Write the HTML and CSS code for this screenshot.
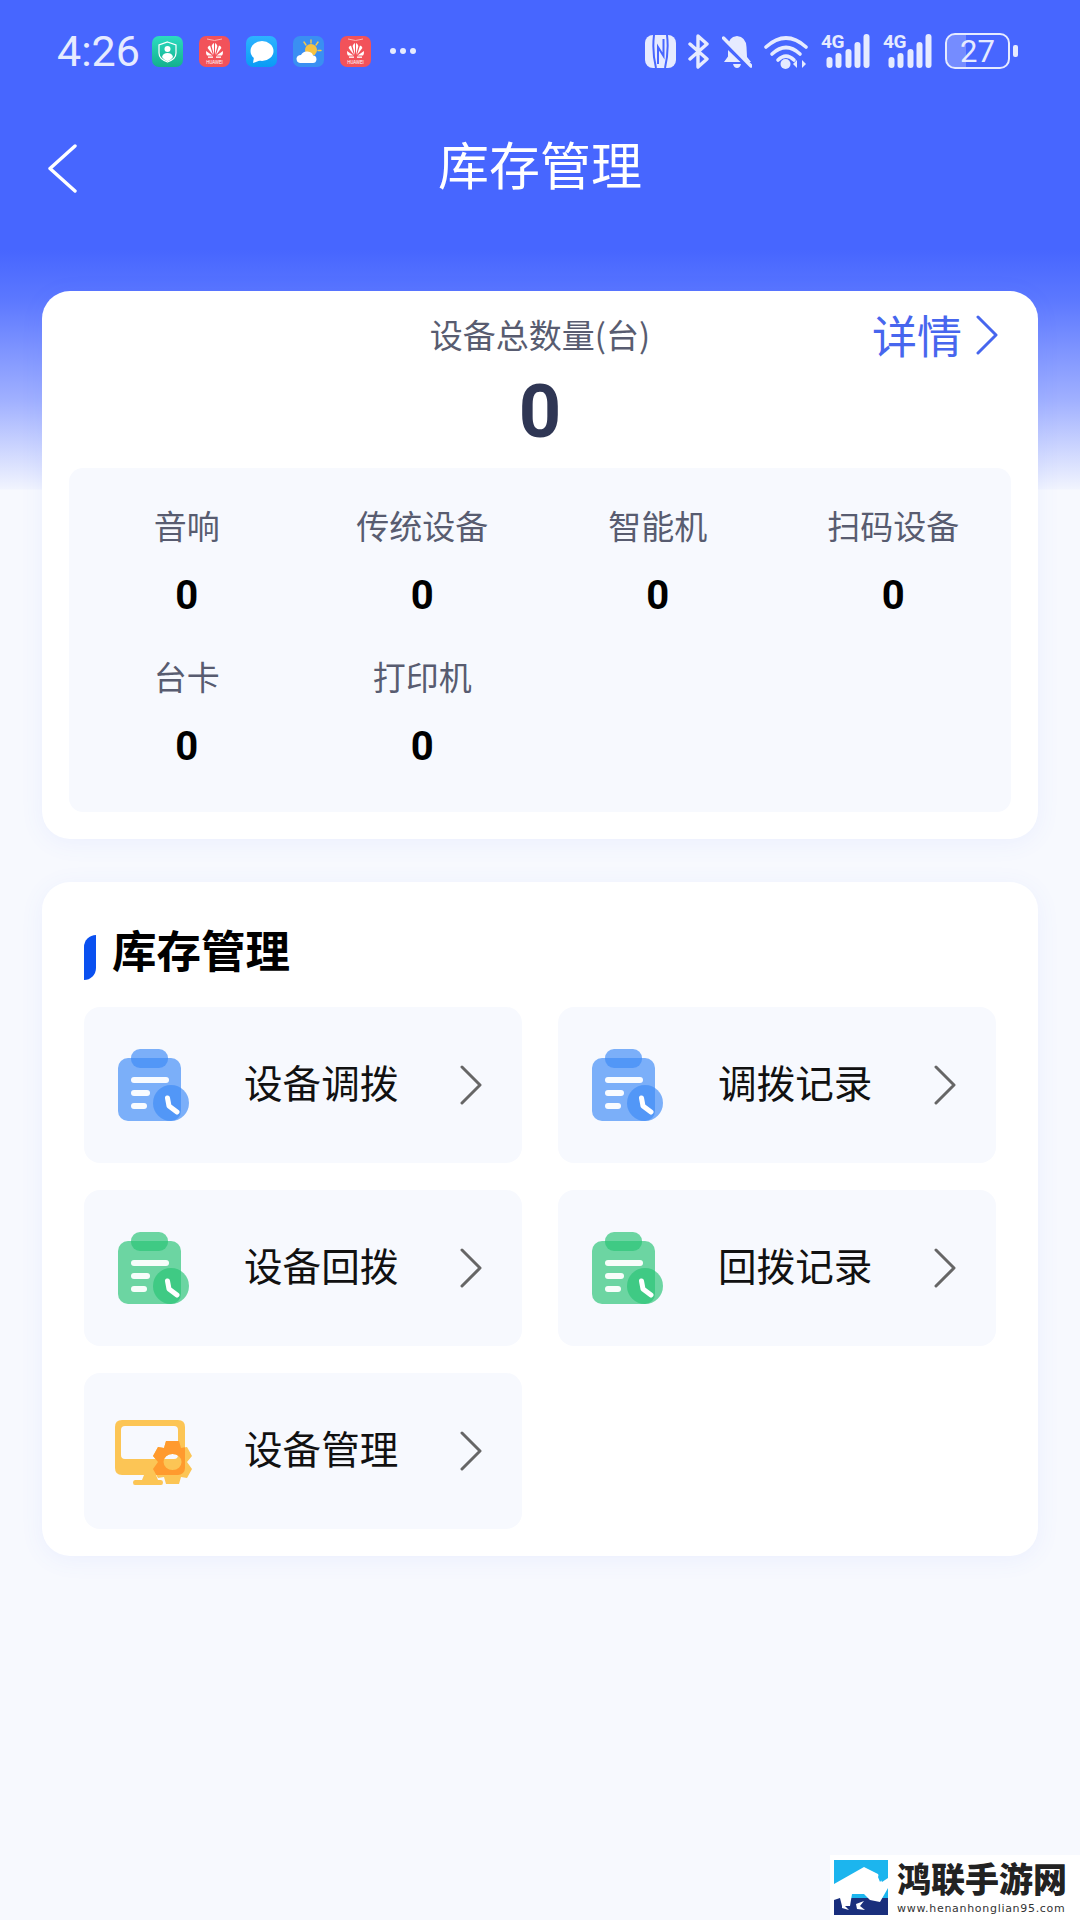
FILE: index.html
```
<!DOCTYPE html>
<html lang="zh">
<head>
    <meta charset="utf-8">
    <title>库存管理</title>
    <link rel="stylesheet" href="styles.css">
</head>
<body>
    <!-- Shared icons -->
    <svg class="defs" width="0" height="0">
        <defs>
            <clipPath id="screen-clip">
                <rect x="1" y="5" width="70" height="55" rx="7"/>
            </clipPath>
            <path id="gear" fill-rule="evenodd" d="M52 26 H65 L67 33 L73 32 L78 41 L73 47 L78 54 L73 63 L67 62 L65 69 H52 L50 62 L44 63 L39 54 L44 47 L39 41 L44 32 L50 33 Z M58.500 39 A9 8 0 1 0 58.600 55 A9 8 0 1 0 58.500 39 Z"/>
        </defs>
        <symbol id="chevron" viewBox="0 0 24 40">
            <path d="M3 2 L21 20 L3 38" fill="none" stroke="currentColor" stroke-width="3" stroke-linecap="round" stroke-linejoin="round"/>
        </symbol>
        <symbol id="clipboard" viewBox="-4 0 80 72">
            <rect x="0" y="9" width="63" height="63" rx="10" fill="currentColor" opacity=".68"/>
            <rect x="13" y="0" width="37" height="19" rx="9" fill="currentColor" opacity=".68"/>
            <rect x="13" y="28" width="38" height="6" rx="3" fill="#fff" opacity=".95"/>
            <rect x="13" y="41" width="19" height="6" rx="3" fill="#fff" opacity=".95"/>
            <rect x="13" y="54" width="16" height="6" rx="3" fill="#fff" opacity=".95"/>
            <circle cx="53" cy="54" r="18" fill="currentColor" opacity=".68"/>
            <path d="M49.500 49 L51 57 L59 63" fill="none" stroke="#fff" stroke-width="5" stroke-linecap="round" stroke-linejoin="round"/>
        </symbol>
        <symbol id="huawei" viewBox="0 0 31 31">
            <rect width="31" height="31" rx="7" fill="#f2525a"/>
            <path d="M8 3 Q15.500 6 23 3" fill="none" stroke="#ffb3b3" stroke-width="1"/>
            <g fill="#fff">
                <path d="M15 19 L12.600 10 Q13.600 7.500 15 7 Z"/>
                <path d="M16 19 L18.400 10 Q17.400 7.500 16 7 Z"/>
                <path d="M14 19 L8.600 12 Q8.600 10 11 9.500 Z"/>
                <path d="M17 19 L22.400 12 Q22.400 10 20 9.500 Z"/>
                <path d="M13.500 19.500 L7 15 Q6.800 18 8 19.500 Z"/>
                <path d="M17.500 19.500 L24 15 Q24.200 18 23 19.500 Z"/>
                <rect x="9" y="20.500" width="5" height="1.300"/>
                <rect x="17" y="20.500" width="5" height="1.300"/>
            </g>
        </symbol>
        <symbol id="sim" viewBox="0 0 49 34">
            <rect x="5.500" y="23" width="6" height="11" rx="3"/>
            <rect x="14.500" y="19" width="6" height="15" rx="3"/>
            <rect x="24.500" y="15" width="6" height="19" rx="3"/>
            <rect x="33.500" y="8" width="6" height="26" rx="3"/>
            <rect x="42.500" y="0" width="6" height="34" rx="3"/>
        </symbol>
    </svg>

    <div class="page">
        <!-- Status bar -->
        <div class="status-bar">
            <span class="time">4:26</span>
            <div class="apps">
                <svg class="app" viewBox="0 0 31 31">
                    <defs><linearGradient id="shield" x1="0" y1="0" x2="0" y2="1"><stop offset="0" stop-color="#2cdcc0"/><stop offset="1" stop-color="#14b08e"/></linearGradient></defs>
                    <rect width="31" height="31" rx="7" fill="url(#shield)"/>
                    <path d="M15.500 6 L24 9 V17 Q24 23 15.500 26 Q7 23 7 17 V9 Z" fill="none" stroke="#fff" stroke-width="1.200"/>
                    <circle cx="15.500" cy="13" r="3" fill="#fff"/>
                    <path d="M10 21 Q11 17 15.500 17 Q20 17 21 21 Q18 25 15.500 25 Q13 25 10 21 Z" fill="#fff"/>
                </svg>
                <svg class="app" viewBox="0 0 31 31"><use href="#huawei"/><text class="huawei-text" x="15.500" y="27.500">HUAWEI</text></svg>
                <svg class="app" viewBox="0 0 31 31">
                    <defs><linearGradient id="msg" x1="0" y1="0" x2="0" y2="1"><stop offset="0" stop-color="#2db3ff"/><stop offset="1" stop-color="#0a9bf5"/></linearGradient></defs>
                    <rect width="31" height="31" rx="7" fill="url(#msg)"/>
                    <ellipse cx="16" cy="15" rx="11.500" ry="10" fill="#fff"/>
                    <path d="M8 21 L7 27 L15 24 Z" fill="#fff"/>
                </svg>
                <svg class="app" viewBox="0 0 31 31">
                    <rect width="31" height="31" rx="7" fill="#3a8ff2"/>
                    <g stroke="#f5c84a" stroke-width="1.400" stroke-linecap="round">
                        <path d="M18 4 V7"/><path d="M11 6 L13 9"/><path d="M25 6 L23 9"/><path d="M28 14.500 H25"/>
                    </g>
                    <circle cx="18" cy="14" r="6" fill="#f7c341"/>
                    <path d="M7 27 Q3.500 26.500 3.500 22.500 Q4 19 8 19 Q10 15 14.500 15.500 Q19.500 16 20 19.500 Q23.500 19.500 23.500 23.500 Q23 27 20 27 Z" fill="#fff"/>
                </svg>
                <svg class="app" viewBox="0 0 31 31"><use href="#huawei"/><text class="huawei-text" x="15.500" y="27.500">HUAWEI</text></svg>
            </div>
            <div class="dots"><i></i><i></i><i></i></div>

            <div class="sys-icons">
                <svg class="sys-nfc" viewBox="0 0 31 33">
                    <rect width="31" height="33" rx="8"/>
                    <g fill="none" stroke="#4766ff" stroke-width="2">
                        <path d="M9 0 Q7 17 11 33"/>
                        <path d="M22 0 Q24 16 20 33"/>
                        <path d="M13 29 V12 L18.500 21 V4"/>
                    </g>
                </svg>
                <svg class="sys-bt" viewBox="0 0 22 35">
                    <path d="M2 10 L19 25 L10 33 V2 L19 10 L2 25" fill="none" stroke="currentColor" stroke-width="3.400" stroke-linejoin="round" stroke-linecap="round"/>
                </svg>
                <svg class="sys-bell" viewBox="0 0 30 33">
                    <path d="M15 1 Q24 2 24.500 12 L25 22 L29 27 H2 L6 21.500 V12 Q6 2 15 1 Z"/>
                    <path d="M11 29 H19 Q18 33 15 33 Q12 33 11 29 Z"/>
                    <path d="M0 5 L28 32" stroke="#4766ff" stroke-width="6"/>
                    <path d="M1.500 3 L29 31" stroke="currentColor" stroke-width="3.400" stroke-linecap="round"/>
                </svg>
                <svg class="sys-wifi" viewBox="0 0 44 35">
                    <g fill="none" stroke="currentColor" stroke-width="3.600" stroke-linecap="round">
                        <path d="M2 13 Q22 -5 42 13"/>
                        <path d="M8 20 Q22 7 36 20"/>
                        <path d="M14 26 Q22 18 30 26"/>
                    </g>
                    <circle cx="21.500" cy="30" r="5"/>
                    <path d="M29 30 L33 26 V34 Z"/>
                    <path d="M38 26 L42 30 L38 34 Z"/>
                </svg>
                <div class="signal"><span>4G</span><svg class="bars"><use href="#sim"/></svg></div>
                <div class="signal"><span>4G</span><svg class="bars"><use href="#sim"/></svg></div>
                <div class="battery">
                    <div class="battery-box"><i class="battery-fill"></i><span>27</span></div>
                    <i class="battery-cap"></i>
                </div>
            </div>
        </div>

        <!-- Nav -->
        <div class="nav">
            <svg class="back" viewBox="0 0 29 49">
                <path d="M27 2 L2 24.500 L27 47" fill="none" stroke="currentColor" stroke-width="3.400" stroke-linecap="round" stroke-linejoin="round"/>
            </svg>
            <h1 class="nav-title">库存管理</h1>
        </div>

        <!-- Totals -->
        <div class="card card-total">
            <div class="total-head">
                <span class="total-label">设备总数量(台)</span>
                <a class="detail"><span class="detail-text">详情</span><svg class="detail-arrow"><use href="#chevron"/></svg></a>
            </div>
            <div class="total-num">0</div>
            <div class="stats">
                <div class="stat"><div class="stat-label">音响</div><div class="stat-value">0</div></div>
                <div class="stat"><div class="stat-label">传统设备</div><div class="stat-value">0</div></div>
                <div class="stat"><div class="stat-label">智能机</div><div class="stat-value">0</div></div>
                <div class="stat"><div class="stat-label">扫码设备</div><div class="stat-value">0</div></div>
                <div class="stat"><div class="stat-label">台卡</div><div class="stat-value">0</div></div>
                <div class="stat"><div class="stat-label">打印机</div><div class="stat-value">0</div></div>
            </div>
        </div>

        <!-- Menu -->
        <div class="card card-menu">
            <div class="section-head">
                <i class="section-bar"></i>
                <h2 class="section-title">库存管理</h2>
            </div>
            <div class="menu">
                <div class="menu-item">
                    <svg class="menu-icon blue"><use href="#clipboard"/></svg>
                    <span class="menu-text">设备调拨</span>
                    <svg class="menu-arrow"><use href="#chevron"/></svg>
                </div>
                <div class="menu-item">
                    <svg class="menu-icon blue"><use href="#clipboard"/></svg>
                    <span class="menu-text">调拨记录</span>
                    <svg class="menu-arrow"><use href="#chevron"/></svg>
                </div>
                <div class="menu-item">
                    <svg class="menu-icon green"><use href="#clipboard"/></svg>
                    <span class="menu-text">设备回拨</span>
                    <svg class="menu-arrow"><use href="#chevron"/></svg>
                </div>
                <div class="menu-item">
                    <svg class="menu-icon green"><use href="#clipboard"/></svg>
                    <span class="menu-text">回拨记录</span>
                    <svg class="menu-arrow"><use href="#chevron"/></svg>
                </div>
                <div class="menu-item">
                    <svg class="menu-icon" viewBox="0 0 80 72">
                        <path fill-rule="evenodd" fill="#fcc555" d="M8 5 H64 Q71 5 71 12 V53 Q71 60 64 60 H8 Q1 60 1 53 V12 Q1 5 8 5 Z M11 11 Q7 11 7 15 V40 Q7 44 11 44 H60 Q64 44 64 40 V15 Q64 11 60 11 Z"/>
                        <path fill="#fcc555" d="M30 60 H42 L44 65 H47 Q49 65 49 67.500 Q49 70 47 70 H21 Q19 70 19 67.500 Q19 65 21 65 H28 Z"/>
                        <use href="#gear" fill="#fcc555"/>
                        <use href="#gear" fill="#ff9a2e" clip-path="url(#screen-clip)"/>
                    </svg>
                    <span class="menu-text">设备管理</span>
                    <svg class="menu-arrow"><use href="#chevron"/></svg>
                </div>
            </div>
        </div>

        <!-- Watermark -->
        <div class="watermark">
            <svg class="wm-logo" viewBox="0 0 54 55">
                <rect width="54" height="55" fill="#1cb5ee"/>
                <path d="M0 38 H54 V55 H0 Z" fill="#1a2f7c"/>
                <path d="M0 24 L30 7 L44 14 L48 22 L54 18 V28 L46 42 L36 40 L30 34 H18 L16 46 H8 L6 38 L0 40 Z" fill="#fff"/>
                <path d="M46 11 L50 17 L46 22 L44 17 Z" fill="#1cb5ee"/>
                <path d="M8 44 L14 41 L11 46 L15 50 L8 48 Z M22 44 L30 41 L26 46 L31 50 L23 49 Z" fill="#fff"/>
            </svg>
            <div class="wm-text">
                <div class="wm-name">鸿联手游网</div>
                <div class="wm-url">www.henanhonglian95.com</div>
            </div>
        </div>
    </div>
</body>
</html>
```

FILE: styles.css
```
* {
    box-sizing: border-box;
}

body {
    margin: 0;
    padding: 0;
    font-family: "Noto Sans CJK SC", "Noto Sans", sans-serif;
    background: #f7f9fe;
}

h1, h2 {
    margin: 0;
    font-weight: normal;
}

.defs {
    position: absolute;
}

.page {
    position: relative;
    width: 1080px;
    height: 1920px;
    overflow: hidden;
    background: linear-gradient(#4766ff 0, #4766ff 250px, #5c78ff 300px, #a0b0ff 400px, #f1f4fe 489px, #f7f9fe 490px);
}

/* Status bar */
.status-bar {
    display: flex;
    align-items: center;
    height: 96px;
    padding: 6px 62px 0 57px;
    color: #e6ebff;
}

.time {
    width: 95px;
    font-family: Roboto, sans-serif;
    font-size: 43px;
    line-height: 1;
}

.apps {
    display: flex;
    gap: 16px;
}

.app {
    width: 31px;
    height: 31px;
}

.huawei-text {
    font-family: Roboto, sans-serif;
    font-size: 4.5px;
    text-anchor: middle;
    fill: #fff;
}

.dots {
    display: flex;
    gap: 4px;
    margin-left: 19px;
}

.dots i {
    width: 6px;
    height: 6px;
    border-radius: 50%;
    background: #e6ebff;
}

.sys-icons {
    display: flex;
    align-items: center;
    gap: 12px;
    margin-left: auto;
    fill: #e6ebff;
}

.sys-nfc {
    width: 31px;
    height: 33px;
}

.sys-bt {
    width: 22px;
    height: 35px;
}

.sys-bell {
    width: 30px;
    height: 33px;
}

.sys-wifi {
    width: 44px;
    height: 35px;
}

.signal {
    position: relative;
    width: 49px;
    height: 34px;
    margin-left: 1px;
}

.signal span {
    position: absolute;
    left: 0;
    top: 0;
    font-family: Roboto, sans-serif;
    font-size: 19px;
    font-weight: 700;
    line-height: 15px;
    letter-spacing: -0.5px;
}

.bars {
    display: block;
    width: 49px;
    height: 34px;
}

.battery {
    display: flex;
    align-items: center;
    gap: 3px;
    margin-left: 1px;
}

.battery-box {
    display: flex;
    align-items: center;
    justify-content: center;
    position: relative;
    width: 65px;
    height: 36px;
    border: 2.5px solid #e6ebff;
    border-radius: 10px;
}

.battery-fill {
    position: absolute;
    left: 0;
    top: 0;
    bottom: 0;
    width: 19px;
    border-radius: 7px 0 0 7px;
    background: rgba(255, 255, 255, 0.25);
}

.battery-box span {
    position: relative;
    font-family: Roboto, sans-serif;
    font-size: 31px;
    line-height: 31px;
}

.battery-cap {
    width: 5px;
    height: 12px;
    border-radius: 2px;
    background: #e6ebff;
}

/* Nav */
.nav {
    display: grid;
    grid-template-columns: 1fr auto 1fr;
    align-items: center;
    height: 138px;
    padding: 0 48px;
    margin-bottom: 57px;
    color: #fff;
}

.back {
    width: 29px;
    height: 49px;
    margin-top: 7px;
}

.nav-title {
    margin-bottom: 4px;
    font-size: 51px;
    line-height: 70px;
}

/* Cards */
.card {
    margin: 0 42px;
    background: #fff;
    border-radius: 28px;
    box-shadow: 0 4px 24px rgba(90, 120, 255, 0.07);
}

.card-total {
    height: 548px;
    padding: 18px 27px 27px;
    margin-bottom: 43px;
}

.total-head {
    display: grid;
    grid-template-columns: 1fr auto 1fr;
    align-items: center;
    height: 52px;
}

.total-label {
    grid-column: 2;
    margin-bottom: 2px;
    font-size: 33px;
    line-height: 50px;
    color: #585c70;
}

.detail {
    display: flex;
    align-items: center;
    justify-content: flex-end;
    gap: 13px;
    padding-right: 12px;
    color: #4766ee;
}

.detail-text {
    margin-bottom: 1px;
    font-size: 45px;
    line-height: 48px;
}

.detail-arrow {
    width: 24px;
    height: 40px;
}

.total-num {
    height: 107px;
    font-family: Roboto, sans-serif;
    font-size: 74px;
    font-weight: 700;
    line-height: 102px;
    text-align: center;
    color: #2f3654;
}

.stats {
    display: grid;
    grid-template-columns: repeat(4, 1fr);
    row-gap: 38px;
    height: 344px;
    padding: 40px 0 41px;
    background: #f7f9fe;
    border-radius: 14px;
    align-content: start;
}

.stat {
    text-align: center;
}

.stat-label {
    font-size: 33px;
    line-height: 35px;
    color: #585c70;
}

.stat-value {
    margin-top: 28px;
    font-family: Roboto, sans-serif;
    font-size: 40px;
    font-weight: 700;
    line-height: 50px;
    color: #000;
}

/* Menu */
.card-menu {
    height: 674px;
    padding: 39px 42px 27px;
}

.section-head {
    display: flex;
    align-items: flex-end;
    gap: 16px;
    margin-bottom: 26px;
}

.section-bar {
    width: 12px;
    height: 45px;
    margin-bottom: 1px;
    border-radius: 12px 0 12px 0;
    background: #0a50f0;
}

.section-title {
    margin-bottom: 4px;
    font-size: 44.5px;
    font-weight: 700;
    line-height: 56px;
    color: #000;
}

.menu {
    display: grid;
    grid-template-columns: repeat(2, 438px);
    grid-auto-rows: 156px;
    column-gap: 36px;
    row-gap: 27px;
}

.menu-item {
    display: flex;
    align-items: center;
    padding: 0 39px 0 30px;
    background: #f7f9fe;
    border-radius: 16px;
}

.menu-icon {
    width: 80px;
    height: 72px;
}

.blue {
    color: #3f8cf6;
}

.green {
    color: #2ac476;
}

.menu-text {
    margin-left: 50px;
    padding-bottom: 9px;
    font-size: 38.6px;
    color: #111;
}

.menu-arrow {
    width: 24px;
    height: 40px;
    margin-left: auto;
    color: #666;
}

/* Watermark */
.watermark {
    position: absolute;
    right: 0;
    bottom: 0;
    display: flex;
    gap: 9px;
    width: 250px;
    height: 65px;
    padding: 5px 0 0 4px;
    background: #fff;
}

.wm-logo {
    flex: none;
    width: 54px;
    height: 55px;
}

.wm-name {
    font-family: "Noto Sans CJK SC", serif;
    font-size: 34px;
    font-weight: 900;
    line-height: 36px;
    color: #222;
}

.wm-url {
    margin-top: 6px;
    font-family: "DejaVu Sans", sans-serif;
    font-size: 11px;
    line-height: 13px;
    letter-spacing: 0.7px;
    color: #333;
    white-space: nowrap;
}
```
